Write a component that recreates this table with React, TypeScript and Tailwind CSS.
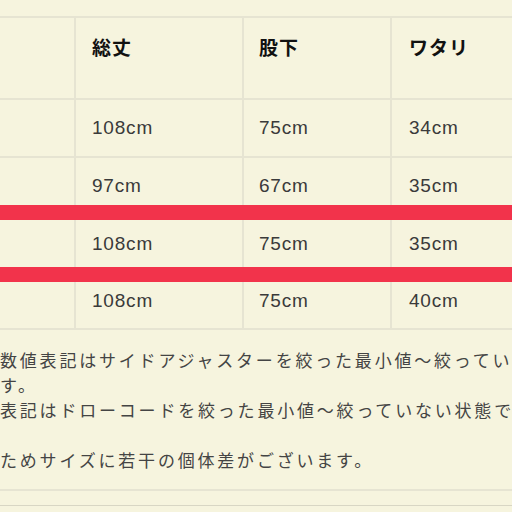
const rows = [
  ["108cm", "75cm", "34cm"],
  ["97cm", "67cm", "35cm"],
  ["108cm", "75cm", "35cm"],
  ["108cm", "75cm", "40cm"],
];

const font = { fontFamily: '"Liberation Sans", "Noto Sans CJK JP", sans-serif' };

export default function App() {
  return (
    <div
      className="relative w-[512px] h-[512px] overflow-hidden bg-[#f6f4de] text-[#3a3a3a]"
      style={font}
    >
      {/* top strip */}
      <div className="h-[18px] border-b-2 border-[#e6e4d2]" />

      {/* size table */}
      <div className="w-[640px]">
        <div className="flex h-[82px] border-b-2 border-[#e6e4d2] text-[19px] font-bold text-[#111]">
          <div className="w-[76px] border-r-2 border-[#e6e4d2]" />
          <div className="w-[168px] border-r-2 border-[#e6e4d2] pl-[16px] pt-[17px] tracking-[1px]">総丈</div>
          <div className="w-[148px] border-r-2 border-[#e6e4d2] pl-[15px] pt-[17px] tracking-[1px]">股下</div>
          <div className="flex-1 pl-[17px] pt-[17px] tracking-[1px]">ワタリ</div>
        </div>
        {rows.map((r, i) => (
          <div
            key={i}
            className={`flex items-center border-b-2 border-[#e6e4d2] text-[19px] tracking-[0.8px] ${i === 3 ? "h-[56px]" : "h-[58px]"}`}
          >
            <div className="w-[76px] h-full border-r-2 border-[#e6e4d2]" />
            <div className="w-[168px] h-full flex items-center border-r-2 border-[#e6e4d2] pl-[16px]">{r[0]}</div>
            <div className="w-[148px] h-full flex items-center border-r-2 border-[#e6e4d2] pl-[15px]">{r[1]}</div>
            <div className="flex-1 h-full flex items-center pl-[17px]">{r[2]}</div>
          </div>
        ))}
      </div>

      {/* notes */}
      <div className="w-[700px] pt-[19px] pb-[15px] border-b-2 border-[#e6e4d2] text-[17px] leading-[25px] tracking-[2.8px] whitespace-nowrap text-[#444]">
        <p>数値表記はサイドアジャスターを絞った最小値〜絞ってい</p>
        <p>す。</p>
        <p>表記はドローコードを絞った最小値〜絞っていない状態で</p>
        <p>&nbsp;</p>
        <p>ためサイズに若干の個体差がございます。</p>
      </div>
      <div className="h-[15px] border-b border-[#d8d6c4]" />

      {/* red marker lines over the table */}
      <div className="absolute left-0 top-[205px] h-[15px] w-full bg-[#f2334b]" />
      <div className="absolute left-0 top-[267px] h-[15px] w-full bg-[#f2334b]" />
    </div>
  );
}
